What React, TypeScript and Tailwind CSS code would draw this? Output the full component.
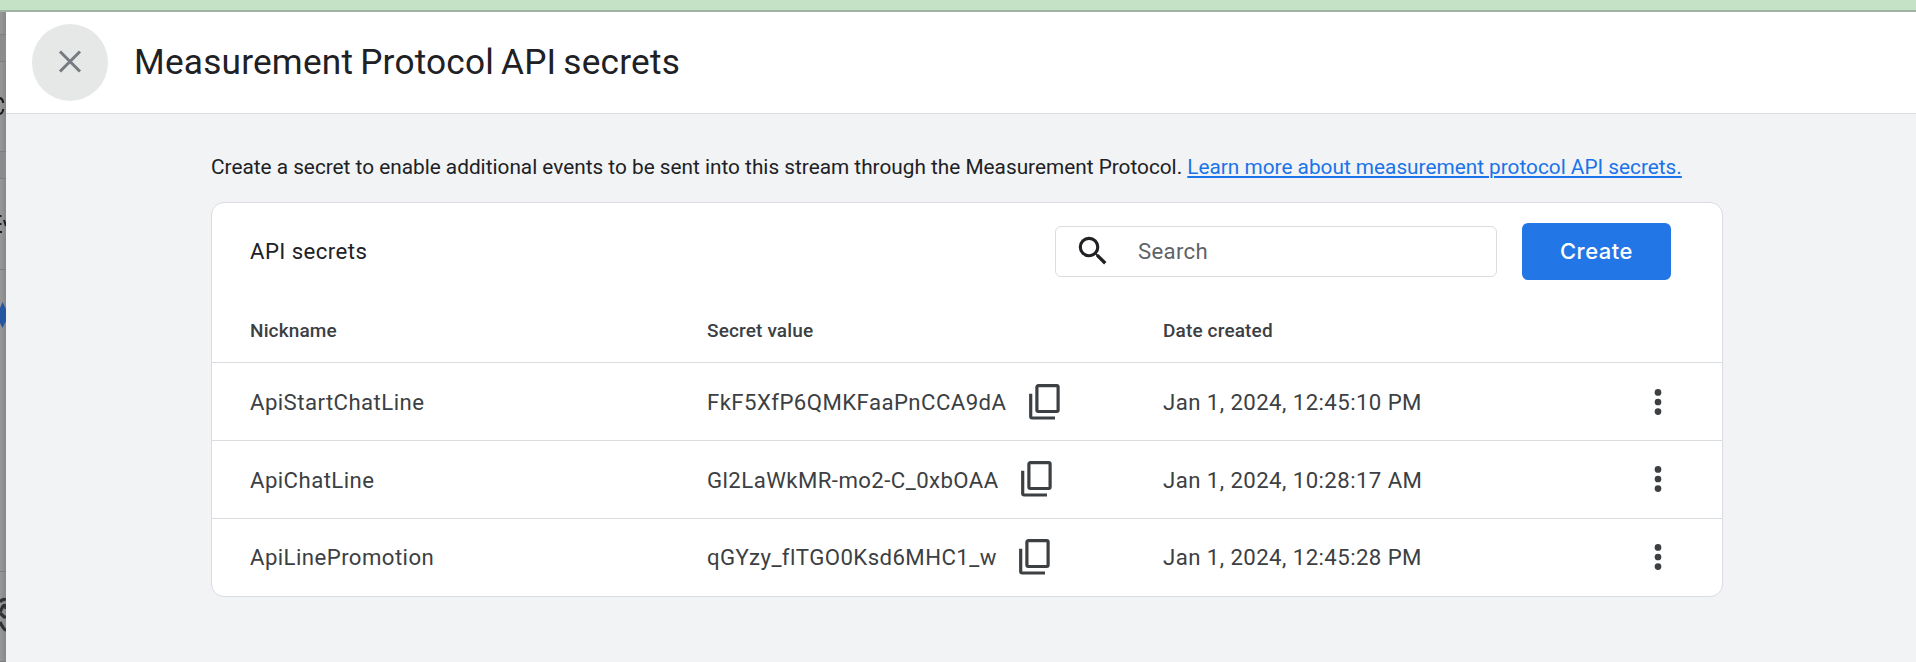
import { MdSearch } from "react-icons/md";

const rows = [
  { name: "ApiStartChatLine", secret: "FkF5XfP6QMKFaaPnCCA9dA", date: "Jan 1, 2024, 12:45:10 PM" },
  { name: "ApiChatLine", secret: "Gl2LaWkMR-mo2-C_0xbOAA", date: "Jan 1, 2024, 10:28:17 AM" },
  { name: "ApiLinePromotion", secret: "qGYzy_flTGO0Ksd6MHC1_w", date: "Jan 1, 2024, 12:45:28 PM" },
];

function CopyIcon() {
  return (
    <svg width="32" height="36" viewBox="0 0 32 36" fill="none" stroke="#3c4043" strokeWidth="3.2">
      <rect x="7.9" y="1.7" width="21.2" height="25.8" rx="1.4" />
      <path d="M1.700 9.800V32.600a1.400 1.400 0 0 0 1.400 1.400H26" />
    </svg>
  );
}

function MoreIcon() {
  return (
    <svg width="8" height="28" viewBox="0 0 8 28" fill="#3c4043">
      <circle cx="4" cy="4.4" r="3.35" />
      <circle cx="4" cy="14" r="3.35" />
      <circle cx="4" cy="23.6" r="3.35" />
    </svg>
  );
}

function PageEdge() {
  return (
    <svg className="block shrink-0" width="6" height="650" viewBox="0 0 6 650">
      <defs>
        <linearGradient id="edge" x1="0" x2="1" y1="0" y2="0">
          <stop offset="0" stopColor="#989898" />
          <stop offset="1" stopColor="#888888" />
        </linearGradient>
      </defs>
      <rect width="6" height="650" fill="url(#edge)" />
      <rect y="22" width="6" height="27" fill="#8b8c8e" />
      <rect y="139" width="6" height="27" fill="#8b8c8e" />
      <path d="M0 22.5H6M0 49.5H6M0 139.5H6M0 166.5H6M0 257.5H6M0 559.5H6M0 649.5H6" stroke="#7d8083" />
      <path d="M-1 86C1.500 86 3 88 3.200 91M-1 102C1.500 102 3 100 3.200 97" fill="none" stroke="#1c1c1c" strokeWidth="2" />
      <path d="M0 204H1.500M0 212H1.500M0 220H2M4 208L6 214" fill="none" stroke="#1c1c1c" strokeWidth="2" />
      <path d="M0 296L2.500 290L6 297V309L2.500 316L0 311Z" fill="#2556a0" />
      <path d="M0 590Q3 586 6 588M0 600L3 594Q6 592 6 597M0 601L4 605H6M0 610Q4 618 6 618" fill="none" stroke="#2f3235" strokeWidth="3.200" />
    </svg>
  );
}

export default function App() {
  return (
    <div className="flex h-[662px] w-[1916px] flex-col overflow-hidden bg-[#f1f3f4] font-[Roboto,sans-serif] text-[#202124]">
      <div className="h-3 shrink-0 border-b-2 border-[#9fb5a1] bg-[#c6e2c6]" />
      <div className="flex min-h-0 flex-1">
        <PageEdge />
        <main className="flex min-w-0 flex-1 flex-col">
          <header className="flex h-[102px] shrink-0 items-center border-b border-[#dadce0] bg-white pl-[26px]">
            <button className="flex h-[77px] w-[76px] items-center justify-center rounded-full bg-[#e6e8e7] pb-px" aria-label="Close">
              <svg width="24" height="24" viewBox="0 0 24 24" fill="none" stroke="#757b80" strokeWidth="3">
                <path d="M2 1.500L22 21.500M22 1.500L2 21.500" />
              </svg>
            </button>
            <h1 className="ml-[26px] pb-0.5 text-[35.2px] leading-[44px] tracking-[0.22px] [word-spacing:-2px]">
              Measurement Protocol API secrets
            </h1>
          </header>

          <div className="flex flex-col pl-[205px]">
            <p className="mt-[38px] text-[20.79px] leading-[30px] whitespace-nowrap">
              Create a secret to enable additional events to be sent into this stream through the Measurement Protocol.{" "}
              <a className="text-[#1a73e8] underline decoration-2 underline-offset-2">
                Learn more about measurement protocol API secrets.
              </a>
            </p>

            <section className="mt-5 h-[395px] w-[1512px] overflow-hidden rounded-[13px] border border-[#dadce0] bg-white text-[22.2px] tracking-[0.43px]">
              <div className="flex h-24 items-center pl-[38px]">
                <h2 className="w-[805px] leading-[30px]">API secrets</h2>
                <div className="flex h-[51px] w-[442px] items-center rounded-[6px] border border-[#dadce0] pl-[18px]">
                  <MdSearch className="size-[38px] shrink-0 text-[#202124]" />
                  <span className="ml-[26px] pt-0.5 tracking-[0.3px] text-[#5f6368]">Search</span>
                </div>
                <button className="ml-[25px] h-[57px] w-[149px] rounded-[6px] bg-[#2276e6] font-[Inter,sans-serif] text-[22px] font-medium tracking-[0.5px] text-white">
                  Create
                </button>
              </div>
              <div className="grid h-[63px] grid-cols-[457px_456px_1fr] items-center pl-[38px] text-[19px] leading-7 font-medium tracking-[0.15px] text-[#3c4043]">
                <span>Nickname</span>
                <span>Secret value</span>
                <span>Date created</span>
              </div>
              {rows.map((row) => (
                <div
                  key={row.name}
                  className="grid h-[78px] grid-cols-[457px_456px_1fr_68px] items-center border-t border-[#dadce0] pl-[38px] leading-8 text-[#3c4043] last:pb-0.5 even:[&_svg]:mb-0.5"
                >
                  <span>{row.name}</span>
                  <span className="flex items-center gap-[22.5px]">
                    {row.secret}
                    <CopyIcon />
                  </span>
                  <span>{row.date}</span>
                  <MoreIcon />
                </div>
              ))}
            </section>
          </div>
        </main>
      </div>
    </div>
  );
}
